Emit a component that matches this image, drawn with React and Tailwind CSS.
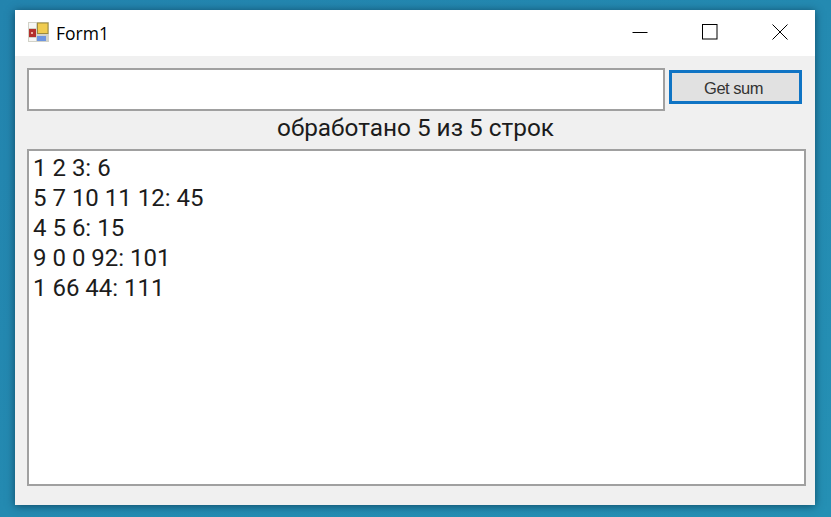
export default function App() {
  const lines = ["1 2 3: 6", "5 7 10 11 12: 45", "4 5 6: 15", "9 0 0 92: 101", "1 66 44: 111"];
  return (
    <div className="w-[831px] h-[517px] overflow-hidden bg-gradient-to-br from-[#2384ae] to-[#2590b4] pt-[10px] pl-[15px] font-['Roboto',sans-serif]">
      <div className="w-[800px] h-[495px] flex flex-col bg-[#f0f0f0] shadow-[0_1px_8px_rgba(0,30,50,0.6)]">
        <div className="h-[46px] shrink-0 bg-white flex items-center pl-[13px] pb-[2px]">
          <svg width="21" height="20" viewBox="0 0 21 20" className="shrink-0">
            <rect x="0" y="0" width="21" height="20" fill="#d2d2c8" />
            <rect x="1" y="1" width="7" height="5" fill="#f6f6f4" />
            <rect x="1" y="16" width="7" height="3" fill="#f6f6f4" />
            <rect x="9" y="0.5" width="11.5" height="11.5" fill="#9c8a3c" />
            <rect x="10" y="1.5" width="9.5" height="9.5" fill="#f0cc50" />
            <rect x="1" y="7" width="7" height="8" fill="#b4302c" />
            <rect x="3" y="10" width="2" height="2" fill="#eeb0a0" />
            <rect x="9" y="14" width="9" height="5" fill="#6d95e0" />
          </svg>
          <span className="ml-[7px] pt-[4px] text-[17.5px] text-black font-['Open_Sans',sans-serif] leading-none">Form1</span>
          <div className="ml-auto flex h-full items-center">
            <div className="w-[70px] flex justify-center">
              <svg width="16" height="16" viewBox="0 0 16 16"><path d="M0.5 8.5H15.5" stroke="#000" fill="none" /></svg>
            </div>
            <div className="w-[70px] flex justify-center">
              <svg width="16" height="16" viewBox="0 0 16 16"><rect x="0.5" y="0.5" width="14.5" height="14.5" stroke="#000" fill="none" /></svg>
            </div>
            <div className="w-[70px] flex justify-center">
              <svg width="16" height="16" viewBox="0 0 16 16"><path d="M0.5 0.5L15.5 15.5M15.5 0.5L0.5 15.5" stroke="#000" fill="none" /></svg>
            </div>
          </div>
        </div>
        <div className="flex-1 flex flex-col pt-[12px] pl-[12px] pr-[9px] pb-[19px]">
          <div className="flex items-start h-[43px] shrink-0">
            <div className="w-[638px] h-[43px] bg-white border-2 border-[#a0a0a0]" />
            <button className="ml-[4px] mt-[2px] w-[133px] h-[34px] pt-[2px] pr-[4px] bg-[#e1e1e1] border-[3px] border-[#0f74c4] text-[16.5px] tracking-[-0.5px] text-[#333] font-['Liberation_Sans',sans-serif] leading-none">Get sum</button>
          </div>
          <div className="h-[38px] shrink-0 flex items-center justify-center pb-[4px] pr-[2px] text-[24.35px] text-[#1c1c1c] leading-none w-[779px]">обработано 5 из 5 строк</div>
          <div className="w-[779px] flex-1 bg-white border-2 border-[#a0a0a0] pl-[4px] pt-[2px] text-[24px] text-[#1c1c1c]">
            {lines.map((l) => (
              <div key={l} className="h-[30px] leading-[30px] whitespace-pre">{l}</div>
            ))}
          </div>
        </div>
      </div>
    </div>
  );
}
